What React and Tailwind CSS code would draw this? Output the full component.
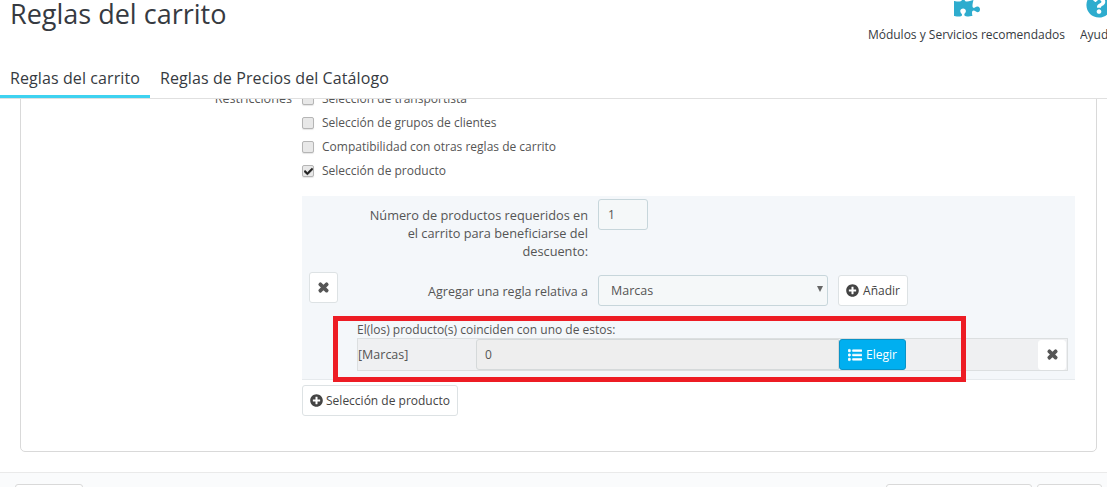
import { FaPuzzlePiece, FaQuestionCircle, FaPlusCircle, FaTimes, FaListUl, FaCheck } from 'react-icons/fa';

const font = { fontFamily: '"Open Sans", sans-serif' };

function Check({ label, on }) {
  return (
    <div className="flex h-6 items-center">
      <span className="flex h-[12px] w-[12px] items-center justify-center rounded-[2px] border border-[#b5b5b5] bg-[#e8e8e8] shadow-[0_1px_1px_rgba(0,0,0,0.1)]">
        {on ? <FaCheck className="text-[9px] text-[#222]" stroke="currentColor" strokeWidth={30} /> : null}
      </span>
      <span className="ml-2 text-[#555]">{label}</span>
    </div>
  );
}

function WhiteBtn({ className, children }) {
  return (
    <button
      type="button"
      className={`flex items-center justify-center rounded-[3px] border border-[#dde2e4] bg-white text-[#444] ${className}`}
    >
      {children}
    </button>
  );
}

function Cross() {
  return <FaTimes className="text-[13px] text-[#555]" stroke="currentColor" strokeWidth={50} />;
}

export default function App() {
  return (
    <div
      className="relative flex h-[487px] w-[1107px] flex-col overflow-hidden bg-white text-[12px] leading-[18px] text-[#555]"
      style={font}
    >
      <header className="flex h-[99px] shrink-0 flex-col border-b border-[#e0e0e0]">
        <div className="flex h-[74px] justify-between overflow-hidden">
          <h1 className="-mt-[4px] ml-[10px] text-[27px] leading-[36px] text-[#363a41]">Reglas del carrito</h1>
          <div className="flex text-[#363a41]">
            <div className="flex flex-col items-center">
              <FaPuzzlePiece className="-mt-[8px] ml-[1px] h-[26px] w-[26px] text-[#2eacce]" />
              <span className="mt-[8px]">Módulos y Servicios recomendados</span>
            </div>
            <div className="ml-[15px] w-[27px] overflow-hidden whitespace-nowrap">
              <FaQuestionCircle className="-mt-[8px] ml-[6px] h-[26px] w-[26px] text-[#2eacce]" />
              <span className="mt-[8px] block">Ayuda</span>
            </div>
          </div>
        </div>
        <nav className="-mt-[6px] flex h-[31px] items-start text-[16px] leading-[22px] tracking-[0.1px] text-[#363a41]">
          <a className="h-[31px] w-[150px] border-b-[3px] border-[#3ed2f0] pl-[10px]">Reglas del carrito</a>
          <a className="ml-[10px]">Reglas de Precios del Catálogo</a>
        </nav>
      </header>

      <main className="h-[373px] shrink-0 overflow-hidden">
        <section className="-mt-[112px] ml-[20px] h-[465px] w-[1077px] rounded-[5px] border border-[#d9d9d9] pt-[99px]">
          <div className="flex">
            <div className="w-[271px] pt-[3px] text-right text-[12.6px] text-[#555]">Restricciones</div>
            <div className="ml-[10px]">
              <Check label="Selección de transportista" />
              <Check label="Selección de grupos de clientes" />
              <Check label="Compatibilidad con otras reglas de carrito" />
              <Check label="Selección de producto" on />
            </div>
          </div>

          <div className="ml-[281px] mt-[13px] h-[184px] w-[773px] border-b border-[#e6eaed] bg-[#f4f7fa] pt-[3px]">
            <div className="flex h-[61px]">
              <div className="w-[286px] pt-[7px] text-right text-[12.75px]">
                Número de productos requeridos en
                <br />
                el carrito para beneficiarse del
                <br />
                descuento:
              </div>
              <div className="ml-[10px] flex h-[31px] w-[50px] items-center rounded-[3px] border border-[#c7d6db] bg-[#f5f8f9] pl-[9px]">1</div>
            </div>
            <div className="mt-[15px] flex h-[31px]">
              <WhiteBtn className="-mt-[3px] ml-[7px] h-[31px] w-[29px]">
                <Cross />
              </WhiteBtn>
              <div className="flex h-[32px] w-[250px] items-center justify-end pt-px text-[12.5px]">Agregar una regla relativa a</div>
              <div className="relative ml-[10px] flex h-[31px] w-[230px] items-center rounded-[3px] border border-[#c7d6db] bg-[#f5f8f9] pl-[12px] pt-px text-[12.5px]">
                Marcas
                <span className="absolute right-[4px] top-[10px] h-0 w-0 border-x-[3.5px] border-t-[6px] border-x-transparent border-t-[#666]" />
              </div>
              <WhiteBtn className="ml-[10px] h-[31px] w-[70px]">
                <FaPlusCircle className="mr-[4px] text-[13px]" />
                Añadir
              </WhiteBtn>
            </div>
            <div className="ml-[55px] mt-[15px] h-[17px]">El(los) producto(s) coinciden con uno de estos:</div>
            <div className="ml-[55px] flex h-[33px] w-[711px] items-center border border-[#dcdfe0] bg-[#eff0f2]">
              <span className="w-[118px] text-[12.5px]">[Marcas]</span>
              <div className="flex h-[31px] w-[363px] items-center rounded-l-[3px] border border-[#d5d9da] bg-[#eeeeee] pl-[8px]">0</div>
              <button
                type="button"
                className="flex h-[31px] w-[67px] items-center justify-center rounded-[3px] border border-[#0a93c7] bg-[#00aff0] text-white"
              >
                <FaListUl className="mr-[4px] text-[14px]" stroke="currentColor" strokeWidth={20} />
                Elegir
              </button>
              <WhiteBtn className="ml-auto mr-[1px] h-[30px] w-[28px] border-white">
                <Cross />
              </WhiteBtn>
            </div>
          </div>

          <WhiteBtn className="ml-[281px] mt-[5px] h-[31px] w-[156px]">
            <FaPlusCircle className="mr-[3px] text-[13px]" />
            Selección de producto
          </WhiteBtn>
        </section>
      </main>

      <footer className="flex h-[15px] shrink-0 justify-between border-t border-[#eaeaea] bg-[#fafbfc] pt-[11px]">
        <div className="ml-[15px] h-[20px] w-[68px] rounded-[3px] border border-[#d9d9d9] bg-white" />
        <div className="mr-[5px] flex">
          <div className="h-[20px] w-[146px] rounded-[3px] border border-[#d9d9d9] bg-white" />
          <div className="ml-[5px] h-[20px] w-[65px] rounded-[3px] border border-[#d9d9d9] bg-white" />
        </div>
      </footer>

      {/* red annotation drawn on top of the screenshot */}
      <div className="pointer-events-none absolute left-[333px] top-[316px] h-[66px] w-[633px] border-[5px] border-[#ed1c24]" />
    </div>
  );
}
